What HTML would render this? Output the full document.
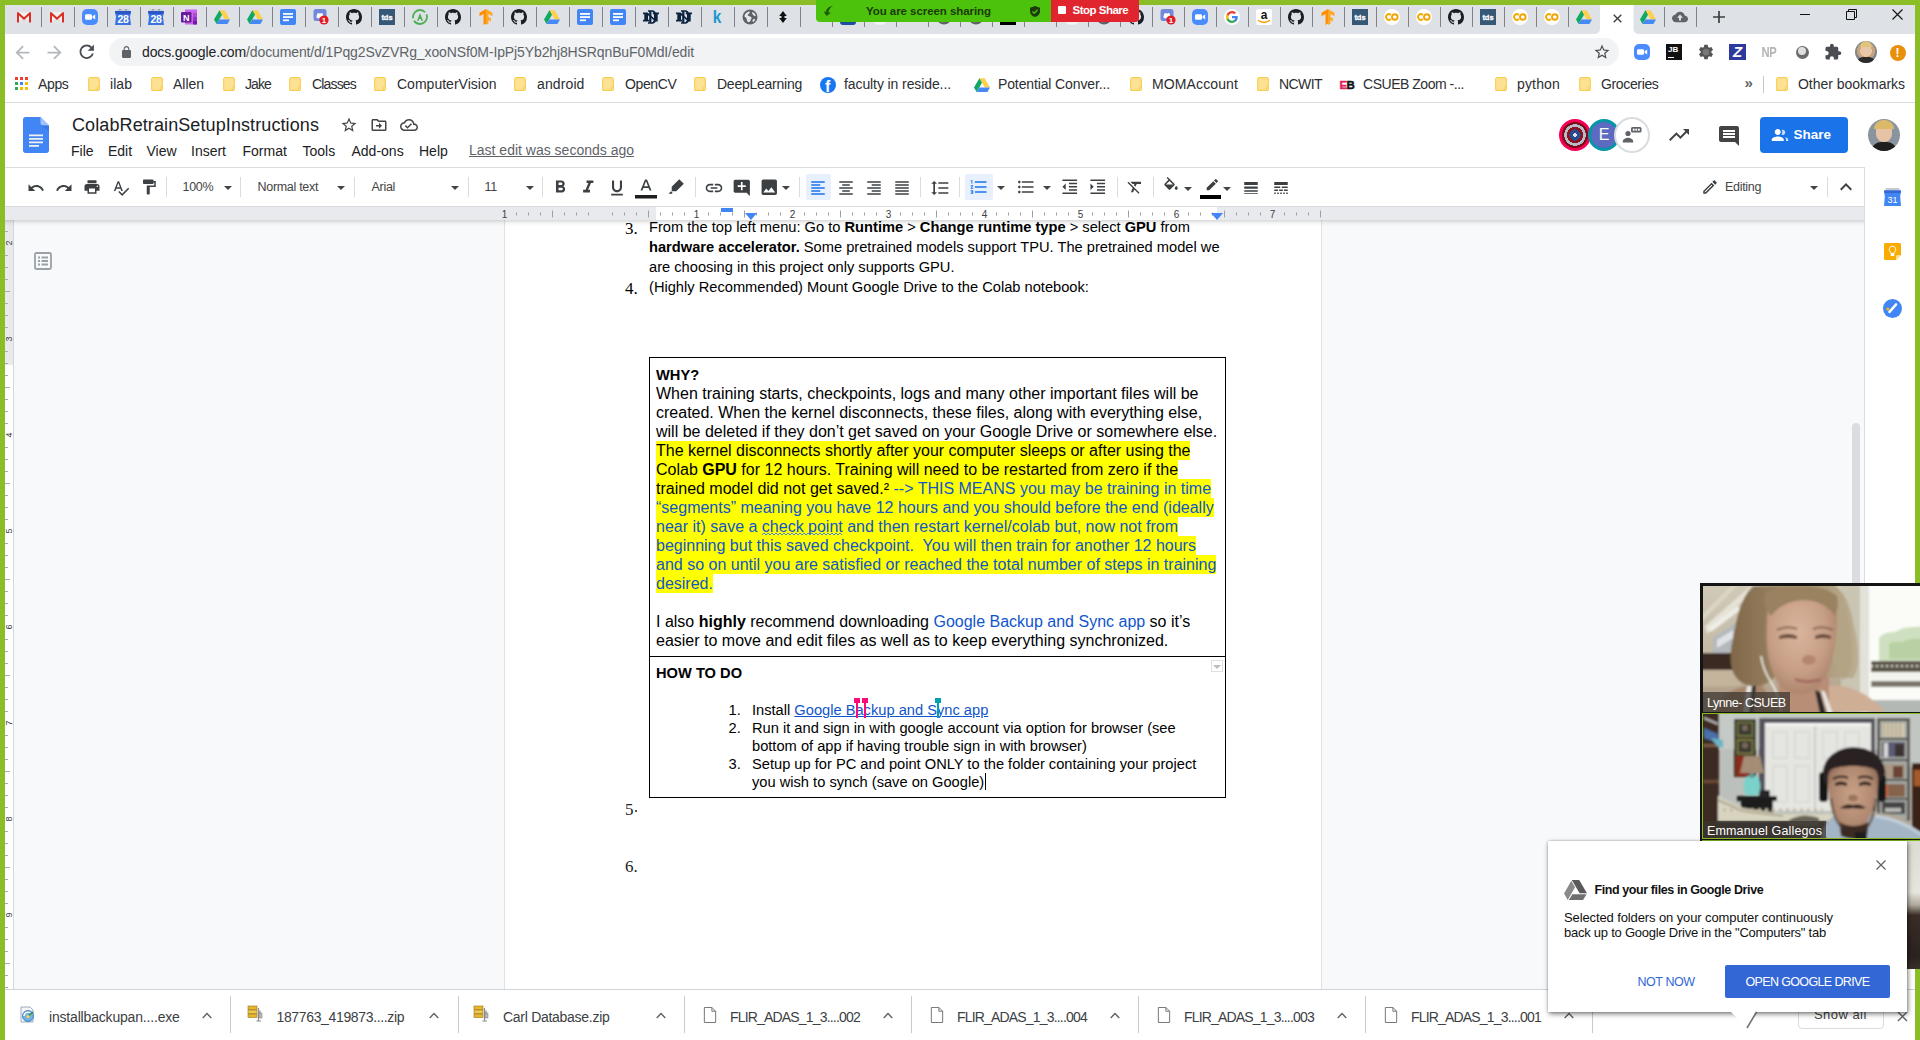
<!DOCTYPE html><html><head><meta charset="utf-8"><title>ColabRetrainSetupInstructions - Google Docs</title><style>
*{box-sizing:border-box;margin:0;padding:0}
html,body{width:1920px;height:1040px;overflow:hidden;background:#fff}
body{position:relative;font-family:"Liberation Sans",sans-serif;color:#202124}
.abs{position:absolute}
svg{display:block;overflow:visible}
/* screen-share border */
#gl{left:0;top:0;width:5px;height:1040px;background:#8bbd26}
#gt{left:0;top:0;width:1920px;height:5px;background:#8bbd26}
#gr{left:1915px;top:0;width:5px;height:1040px;background:#8bbd26}
/* chrome */
#tabbar{left:5px;top:5px;width:1910px;height:29px;background:#dee1e6}
.tsep{position:absolute;top:7px;width:1px;height:20px;background:#80848a}
.tic{position:absolute;top:9px;width:16px;height:16px}
#acttab{left:1592px;top:5px;width:50px;height:29px}
#navbar{left:5px;top:34px;width:1910px;height:34px;background:#fff}
#omni{left:108.500px;top:38px;width:1510.500px;height:28px;border-radius:14px;background:#f1f3f4}
#url{left:142px;top:43px;font-size:14px;line-height:18px;color:#5f6368;letter-spacing:-0.12px;white-space:nowrap}
#url b{font-weight:normal;color:#202124}
#bmbar{left:5px;top:68px;width:1910px;height:35px;background:#fff;border-bottom:1px solid #dadce0}
.bm{position:absolute;top:76px;font-size:14px;line-height:17px;color:#2c2e31;white-space:nowrap}
.fold{position:absolute;top:77px;width:12px;height:14px;margin-left:-1.500px}
/* docs */
#dochead{left:5px;top:103px;width:1910px;height:64px;background:#fff}
#title{left:72px;top:113px;font-size:18px;line-height:24px;color:#202124;white-space:nowrap;letter-spacing:0.1px}
.menu{position:absolute;top:142px;font-size:14px;line-height:18px;color:#202124;white-space:nowrap}
#lastedit{left:469px;top:141px;font-size:14px;line-height:18px;color:#5f6368;text-decoration:underline;white-space:nowrap}
#toolbar{left:5px;top:167px;width:1859px;height:39px;background:#fff;border-top:1px solid #dadce0}
.tbtxt{position:absolute;font-size:12.500px;line-height:16px;color:#444;white-space:nowrap;letter-spacing:-0.3px}
.tsp{position:absolute;top:177px;width:1px;height:20px;background:#dadce0}
.caret{position:absolute;width:0;height:0;border-left:4px solid transparent;border-right:4px solid transparent;border-top:4px solid #444}
#ruler{left:5px;top:206px;width:1859px;height:14px;background:#e8eaed;border-top:1px solid #dadce0}
#rulerw{left:656px;top:207px;width:561px;height:13px;background:#fff}
.rnum{position:absolute;top:207.500px;font-size:10px;line-height:13px;color:#3c4043;width:12px;text-align:center}
#docbg{left:5px;top:220px;width:1859px;height:770px;background:#f8f9fa}
#vruler{left:5px;top:220px;width:8px;height:770px;background:#fff}
#vrulerg{left:5px;top:220px;width:8px;height:145px;background:#e8eaed}
#page{left:504px;top:220px;width:818px;height:770px;background:#fff;border-left:1px solid #e2e2e2;border-right:1px solid #e2e2e2}
#side{left:1864px;top:167px;width:51px;height:822px;background:#fff;border-left:1px solid #dadce0}
.doc{position:absolute;font-size:14.667px;line-height:20px;color:#000;white-space:nowrap}
.t16{position:absolute;font-size:16px;line-height:19px;color:#000;white-space:nowrap}
.hl{background:#ffff00;display:inline-block;height:19px;line-height:19px;vertical-align:top}
.bl{color:#1155cc}
.lnum{position:absolute;font-family:"Liberation Serif",serif;font-size:17px;line-height:20px;color:#000}
/* downloads */
#dlbar{left:5px;top:989px;width:1910px;height:51px;background:#fff;border-top:1px solid #d0d3d7}
.dl{position:absolute;top:1008px;font-size:14px;line-height:18px;color:#3c4043;white-space:nowrap}
.dlsep{position:absolute;top:996px;width:1px;height:37px;background:#c8cacd}

</style></head><body>
<svg width="0" height="0" style="position:absolute">
<defs>
<symbol id="i-gmail" viewBox="0 0 16 16"><rect x="1" y="3.200" width="14" height="10.300" fill="#f1f1f1"/><path d="M2 13.500 8 8.500l6 5z" fill="#e2e2e2"/><path d="M1 13.500V3.200h1.500L8 8.300l5.500-5.100H15v10.300h-2V6.400L8 10.900 3 6.400v7.100z" fill="#d93025"/></symbol>
<symbol id="i-zoom" viewBox="0 0 16 16"><rect x="0" y="0" width="16" height="16" rx="5" fill="#4a8cff"/><rect x="3" y="5.200" width="7" height="5.600" rx="1.300" fill="#fff"/><path d="M10.600 7.200 13.200 5.500v5L10.600 8.800z" fill="#fff"/></symbol>
<symbol id="i-cal" viewBox="0 0 16 16"><rect x="1.500" y="0.300" width="13" height="3" fill="#c9cdd3"/><rect x="4" y="0" width="2" height="1.500" fill="#9aa0a6"/><rect x="10" y="0" width="2" height="1.500" fill="#9aa0a6"/><path d="M0 2h16l-1 6 1 8H0l1-8z" fill="#3b73e0"/><path d="M0 2h16l-.5 3H.5z" fill="#2a56c6"/><text x="8" y="14" font-family="Liberation Sans,sans-serif" font-size="10.500" font-weight="bold" fill="#fff" text-anchor="middle" letter-spacing="-0.3">28</text></symbol>
<symbol id="i-onenote" viewBox="0 0 16 16"><rect x="4" y="0.500" width="12" height="15" fill="#ca64ea"/><rect x="12" y="4" width="4" height="4" fill="#ae4bd5"/><rect x="12" y="8" width="4" height="4" fill="#9332bf"/><rect x="12" y="12" width="4" height="3.500" fill="#7719aa"/><rect x="0" y="3" width="10.500" height="10.500" rx="1" fill="#6a1b9a"/><text x="5.250" y="11.600" font-family="Liberation Sans,sans-serif" font-size="9" font-weight="bold" fill="#fff" text-anchor="middle">N</text></symbol>
<symbol id="i-drive" viewBox="0 0 16 16"><path d="M5.400 1.200h5.200L16 10.500h-5.200z" fill="#ffcf48"/><path d="M5.400 1.200 8 5.700 2.600 15 0 10.500z" fill="#11a861"/><path d="M5.300 10.500H16L13.400 15H2.600z" fill="#4688f4"/></symbol>
<symbol id="i-docs" viewBox="0 0 16 16"><rect x="0" y="0" width="16" height="16" rx="2" fill="#4285f4"/><rect x="3" y="4" width="10" height="1.800" fill="#fff"/><rect x="3" y="7.200" width="10" height="1.800" fill="#fff"/><rect x="3" y="10.400" width="6" height="1.800" fill="#fff"/></symbol>
<symbol id="i-disc" viewBox="0 0 16 16"><rect x="0.500" y="0" width="13" height="12" rx="2.500" fill="#7289da"/><path d="M3.500 8.500c0-3 1-4.500 2-4.500l1 .6h1l1-.6c1 0 2 1.500 2 4.500-1 .9-2 .9-2.500.9l-.4-.8h-1.200l-.4.800c-.5 0-1.500 0-2.500-.9z" fill="#fff"/><circle cx="11" cy="11" r="4.600" fill="#e31b23"/><text x="11" y="14" font-family="Liberation Sans,sans-serif" font-size="8" font-weight="bold" fill="#fff" text-anchor="middle">1</text></symbol>
<symbol id="i-gh" viewBox="0 0 16 16"><path fill="#1b1f23" d="M8 0C3.580 0 0 3.580 0 8c0 3.540 2.290 6.530 5.470 7.590.4.070.55-.17.55-.38 0-.19-.01-.82-.01-1.490-2.010.370-2.530-.490-2.690-.940-.09-.23-.48-.94-.82-1.130-.28-.15-.68-.52-.01-.53.630-.010 1.080.580 1.230.820.720 1.210 1.870.870 2.330.660.070-.52.280-.87.510-1.070-1.780-.2-3.640-.89-3.640-3.950 0-.87.310-1.590.820-2.150-.08-.2-.36-1.020.080-2.120 0 0 .67-.21 2.200.820.640-.18 1.320-.27 2-.27.680 0 1.360.090 2 .270 1.530-1.040 2.200-.82 2.200-.82.440 1.100.160 1.920.080 2.120.510.560.820 1.270.820 2.150 0 3.070-1.870 3.750-3.650 3.950.290.250.540.730.540 1.480 0 1.070-.01 1.930-.01 2.200 0 .210.150.460.550.380A8.013 8.013 0 0016 8c0-4.420-3.580-8-8-8z"/></symbol>
<symbol id="i-tds" viewBox="0 0 16 16"><rect width="16" height="16" fill="#355876"/><text x="8" y="11" font-family="Liberation Sans,sans-serif" font-size="7.500" font-weight="bold" fill="#fff" text-anchor="middle" stroke="#fff" stroke-width=".3">tds</text></symbol>
<symbol id="i-ga" viewBox="0 0 16 16"><circle cx="8" cy="8" r="7" fill="none" stroke="#4caf50" stroke-width="1.800" stroke-dasharray="18 2.500"/><path d="M5 11.800 8 4l3 7.800h-1.700L8.800 10H7.200l-.5 1.800z" fill="#4caf50"/></symbol>
<symbol id="i-tf" viewBox="0 0 16 16"><path d="M8 0 1.500 3.700v3.600l4-2.300V16l2.500-1.500z" fill="#ff8f00"/><path d="M8 0l6.500 3.700v3.600l-4-2.300v3l2.500 1.400v3L10.500 11v3.500L8 16z" fill="#ffa726"/></symbol>
<symbol id="i-nd" viewBox="0 0 16 16"><g fill="#0c2340"><path d="M5 1.200h4c3 0 4.600 2.600 4.600 6.800S12 14.800 9 14.800H5v-1.600h1.200V2.800H5zM8.400 2.800v10.400H9c1.500 0 2.200-2 2.200-5.200S10.500 2.800 9 2.800z" fill-rule="evenodd"/><path d="M0 3.600h4.600L11 9.200V5.200H9.800V3.600H16v1.600h-1.300v7.200h-2.500L5 6.300v4.500h1.300v1.600H0v-1.600h1.300V5.200H0z"/></g></symbol>
<symbol id="i-k" viewBox="0 0 16 16"><text x="8" y="14.300" font-family="Liberation Sans,sans-serif" font-size="18" font-weight="bold" fill="#1c96d0" text-anchor="middle" transform="translate(1.200 0) scale(.85 1)">k</text></symbol>
<symbol id="i-globe" viewBox="0 0 16 16"><circle cx="8" cy="8" r="7.500" fill="#5f6368"/><path d="M2.500 6.500c1-2.500 3-3.800 5-4 .5 1 0 2-1 2.500s-1 1.500 0 2 2.500.5 3 1.500-1 2-1 3-1.500 2-2.500 1.500S5 11 4.500 9.500 2 8 2.500 6.500zM10.500 3c1.500.5 3 2 3.300 4-1 .5-2-.5-2.800-1.300S9.800 3.800 10.500 3zM11.500 10c1-.3 1.800.2 1.500 1s-1.200 1.800-2 2-.5-2.500.5-3z" fill="#e6e8eb"/></symbol>
<symbol id="i-ud" viewBox="0 0 16 16"><path d="M8 2 11.800 7H4.200zM8 14 4.200 9h7.600z" fill="#111"/><rect x="6.500" y="6.500" width="3" height="3" fill="#111"/></symbol>
<symbol id="i-g" viewBox="0 0 16 16"><circle cx="8" cy="8" r="8" fill="#fff"/><g transform="translate(2 2) scale(.75)"><path d="M15.700 8.200c0-.6-.05-1.100-.15-1.700H8v3.100h4.300c-.2 1-.75 1.850-1.600 2.400v2h2.600c1.500-1.400 2.400-3.450 2.400-5.800z" fill="#4285f4"/><path d="M8 16c2.150 0 4-.7 5.300-1.950l-2.600-2c-.7.500-1.650.800-2.700.800-2.100 0-3.850-1.400-4.500-3.300H.85v2.050C2.150 14.200 4.900 16 8 16z" fill="#34a853"/><path d="M3.500 9.550c-.15-.5-.25-1-.25-1.550s.1-1.050.25-1.550V4.400H.85C.3 5.500 0 6.700 0 8s.3 2.500.85 3.600z" fill="#fbbc05"/><path d="M8 3.150c1.150 0 2.200.4 3.050 1.200l2.300-2.300C11.950.800 10.150 0 8 0 4.900 0 2.150 1.800.85 4.400L3.500 6.450c.65-1.900 2.400-3.300 4.500-3.300z" fill="#ea4335"/></g></symbol>
<symbol id="i-amz" viewBox="0 0 16 16"><rect width="16" height="16" rx="2" fill="#fff"/><text x="8" y="10" font-family="Liberation Sans,sans-serif" font-size="12" font-weight="bold" fill="#111" text-anchor="middle">a</text><path d="M2.500 11.500c3.500 2.500 7.500 2.500 11 0" fill="none" stroke="#ff9900" stroke-width="1.500" stroke-linecap="round"/></symbol>
<symbol id="i-co" viewBox="0 0 16 16"><circle cx="8" cy="8" r="8" fill="#fff"/><path d="M6.900 6A2.800 2.800 0 1 0 6.900 10" fill="none" stroke="#f9ab00" stroke-width="1.900"/><circle cx="10.800" cy="8" r="2.800" fill="none" stroke="#f5a300" stroke-width="1.900"/></symbol>
<symbol id="i-cloud" viewBox="0 0 16 16"><path d="M12.900 6.700C12.450 4.400 10.430 2.700 8 2.700c-1.930 0-3.600 1.090-4.430 2.690C1.560 5.600 0 7.300 0 9.350c0 2.200 1.790 4 4 4h8.650c1.840 0 3.350-1.490 3.350-3.330 0-1.760-1.370-3.190-3.100-3.320z" fill="#5f6368"/><path d="M8 5.500 5 8.800h2v2.700h2V8.800h2z" fill="#dee1e6"/></symbol>
<symbol id="i-folder" viewBox="0 0 12 14"><path d="M1.500.600h8.800c.6 0 1 .4 1 1v10.800c0 .6-.4 1-1 1H.7V1.400c0-.4.400-.8.800-.8z" fill="#fde293" stroke="#f6c945" stroke-width="1"/><rect x="9.300" y="9.600" width="2.200" height="3.800" rx="1" fill="#fde293" stroke="#f6c945" stroke-width=".8"/></symbol>
<symbol id="i-file" viewBox="0 0 14 17"><path d="M1 .5h8l4 4v12H1z" fill="#fff" stroke="#6e6e6e" stroke-width="1"/><path d="M9 .5v4h4" fill="none" stroke="#6e6e6e" stroke-width="1"/></symbol>
<symbol id="i-zip" viewBox="0 0 18 18"><rect x="1" y="1" width="9" height="3.500" fill="#e9b630" stroke="#9a7414" stroke-width=".6"/><rect x="1" y="5" width="9" height="3.500" fill="#f0c84a" stroke="#9a7414" stroke-width=".6"/><rect x="1" y="9" width="9" height="3.500" fill="#e9b630" stroke="#9a7414" stroke-width=".6"/><path d="M11.500 3v13M9.500 16h4.500M13 5.500v7" stroke="#8c8c8c" stroke-width="1.200" fill="none"/><rect x="12" y="8" width="3" height="5" fill="#b9b9b9" stroke="#777" stroke-width=".5"/></symbol>
<symbol id="i-exe" viewBox="0 0 18 18"><path d="M2 1h9l3 3v12H2z" fill="#f4f6fa" stroke="#8a99ad" stroke-width=".8"/><circle cx="9" cy="10" r="5.500" fill="#6fb4e8" stroke="#2f6fb0" stroke-width=".8"/><path d="M5 10a4 4 0 0 1 7-2.500" stroke="#fff" stroke-width="1.400" fill="none"/><path d="M9 10 14 6" stroke="#2b8a3e" stroke-width="1.600"/><circle cx="9" cy="10.500" r="1.600" fill="#ffd54a"/></symbol>
</defs>
</svg>

<div class="abs" id="gl"></div><div class="abs" id="gt"></div><div class="abs" id="gr"></div>
<div class="abs" id="tabbar"></div>
<svg class="abs" style="left:1594px;top:5px" width="46" height="29" viewBox="0 0 46 29"><path d="M0 29C4 29 6 27 6 23V0H39.500V23C39.500 27 41.500 29 46 29z" fill="#fff"/></svg>
<div class="tsep" style="left:41px"></div>
<svg class="tic" style="left:16.0px"><use href="#i-gmail"/></svg>
<div class="tsep" style="left:74px"></div>
<svg class="tic" style="left:49.0px"><use href="#i-gmail"/></svg>
<div class="tsep" style="left:107px"></div>
<svg class="tic" style="left:82.0px"><use href="#i-zoom"/></svg>
<div class="tsep" style="left:140px"></div>
<svg class="tic" style="left:115.0px"><use href="#i-cal"/></svg>
<div class="tsep" style="left:173px"></div>
<svg class="tic" style="left:148.0px"><use href="#i-cal"/></svg>
<div class="tsep" style="left:206px"></div>
<svg class="tic" style="left:181.0px"><use href="#i-onenote"/></svg>
<div class="tsep" style="left:239px"></div>
<svg class="tic" style="left:214.0px"><use href="#i-drive"/></svg>
<div class="tsep" style="left:272px"></div>
<svg class="tic" style="left:247.0px"><use href="#i-drive"/></svg>
<div class="tsep" style="left:305px"></div>
<svg class="tic" style="left:280.0px"><use href="#i-docs"/></svg>
<div class="tsep" style="left:338px"></div>
<svg class="tic" style="left:313.0px"><use href="#i-disc"/></svg>
<div class="tsep" style="left:371px"></div>
<svg class="tic" style="left:346.0px"><use href="#i-gh"/></svg>
<div class="tsep" style="left:404px"></div>
<svg class="tic" style="left:379.0px"><use href="#i-tds"/></svg>
<div class="tsep" style="left:437px"></div>
<svg class="tic" style="left:412.0px"><use href="#i-ga"/></svg>
<div class="tsep" style="left:470px"></div>
<svg class="tic" style="left:445.0px"><use href="#i-gh"/></svg>
<div class="tsep" style="left:503px"></div>
<svg class="tic" style="left:478.0px"><use href="#i-tf"/></svg>
<div class="tsep" style="left:536px"></div>
<svg class="tic" style="left:511.0px"><use href="#i-gh"/></svg>
<div class="tsep" style="left:569px"></div>
<svg class="tic" style="left:544.0px"><use href="#i-drive"/></svg>
<div class="tsep" style="left:602px"></div>
<svg class="tic" style="left:577.0px"><use href="#i-docs"/></svg>
<div class="tsep" style="left:635px"></div>
<svg class="tic" style="left:610.0px"><use href="#i-docs"/></svg>
<div class="tsep" style="left:668px"></div>
<svg class="tic" style="left:643.0px"><use href="#i-nd"/></svg>
<div class="tsep" style="left:701px"></div>
<svg class="tic" style="left:676.0px"><use href="#i-nd"/></svg>
<div class="tsep" style="left:734px"></div>
<svg class="tic" style="left:709.0px"><use href="#i-k"/></svg>
<div class="tsep" style="left:767px"></div>
<svg class="tic" style="left:742.0px"><use href="#i-globe"/></svg>
<div class="tsep" style="left:800px"></div>
<svg class="tic" style="left:775.0px"><use href="#i-ud"/></svg>
<div class="tsep" style="left:832px"></div>
<div class="tsep" style="left:864px"></div>
<div class="abs" style="left:840.0px;top:9px;width:16px;height:16px;border-radius:3px;background:#1a4fa0"></div>
<div class="tsep" style="left:896px"></div>
<div class="abs" style="left:872.0px;top:9px;width:16px;height:16px;border-radius:8px;background:#f4f4f4"></div>
<div class="tsep" style="left:928px"></div>
<div class="tsep" style="left:960px"></div>
<svg class="tic" style="left:936.0px"><use href="#i-globe"/></svg>
<div class="tsep" style="left:992px"></div>
<svg class="tic" style="left:968.0px"><use href="#i-globe"/></svg>
<div class="tsep" style="left:1024px"></div>
<div class="abs" style="left:1000.0px;top:9px;width:16px;height:16px;background:#000"></div>
<div class="tsep" style="left:1056px"></div>
<div class="tsep" style="left:1088px"></div>
<div class="abs" style="left:1064.0px;top:9px;width:16px;height:16px;border-radius:8px;background:#f4f4f4"></div>
<div class="tsep" style="left:1120px"></div>
<svg class="tic" style="left:1096.0px"><use href="#i-globe"/></svg>
<div class="tsep" style="left:1152px"></div>
<svg class="tic" style="left:1128.0px"><use href="#i-gh"/></svg>
<div class="tsep" style="left:1184px"></div>
<svg class="tic" style="left:1160.0px"><use href="#i-disc"/></svg>
<div class="tsep" style="left:1216px"></div>
<svg class="tic" style="left:1192.0px"><use href="#i-zoom"/></svg>
<div class="tsep" style="left:1248px"></div>
<svg class="tic" style="left:1224.0px"><use href="#i-g"/></svg>
<div class="tsep" style="left:1280px"></div>
<svg class="tic" style="left:1256.0px"><use href="#i-amz"/></svg>
<div class="tsep" style="left:1312px"></div>
<svg class="tic" style="left:1288.0px"><use href="#i-gh"/></svg>
<div class="tsep" style="left:1344px"></div>
<svg class="tic" style="left:1320.0px"><use href="#i-tf"/></svg>
<div class="tsep" style="left:1376px"></div>
<svg class="tic" style="left:1352.0px"><use href="#i-tds"/></svg>
<div class="tsep" style="left:1408px"></div>
<svg class="tic" style="left:1384.0px"><use href="#i-co"/></svg>
<div class="tsep" style="left:1440px"></div>
<svg class="tic" style="left:1416.0px"><use href="#i-co"/></svg>
<div class="tsep" style="left:1472px"></div>
<svg class="tic" style="left:1448.0px"><use href="#i-gh"/></svg>
<div class="tsep" style="left:1504px"></div>
<svg class="tic" style="left:1480.0px"><use href="#i-tds"/></svg>
<div class="tsep" style="left:1536px"></div>
<svg class="tic" style="left:1512.0px"><use href="#i-co"/></svg>
<div class="tsep" style="left:1568px"></div>
<svg class="tic" style="left:1544.0px"><use href="#i-co"/></svg>
<svg class="tic" style="left:1576.0px"><use href="#i-drive"/></svg>
<svg class="abs" style="left:1612.5px;top:13.500px" width="9" height="9" viewBox="0 0 9 9"><path d="M.7.700l7.600 7.600M8.300.700l-7.600 7.600" stroke="#3c4043" stroke-width="1.400"/></svg>
<div class="tsep" style="left:1664px"></div>
<svg class="tic" style="left:1640.0px"><use href="#i-drive"/></svg>
<div class="tsep" style="left:1696px"></div>
<svg class="tic" style="left:1672.0px"><use href="#i-cloud"/></svg>
<svg class="abs" style="left:1712px;top:10px" width="14" height="14" viewBox="0 0 14 14"><path d="M7 1v12M1 7h12" stroke="#3c4043" stroke-width="1.700"/></svg>
<div class="abs" style="left:1800px;top:14px;width:10px;height:1px;background:#111"></div>
<svg class="abs" style="left:1846px;top:9px" width="11" height="11" viewBox="0 0 11 11"><path d="M.5 2.500h8v8h-8zM2.500 2.500v-2h8v8h-2" fill="none" stroke="#111" stroke-width="1"/></svg>
<svg class="abs" style="left:1892px;top:9px" width="11" height="11" viewBox="0 0 11 11"><path d="M.5.5l10 10M10.500.5l-10 10" stroke="#111" stroke-width="1.100"/></svg>
<div class="abs" style="left:816px;top:0;width:236px;height:21.500px;background:#4cc20c;border-radius:0 0 0 4px"></div>
<div class="abs" style="left:1051px;top:0;width:88px;height:21.500px;background:#e0252f;border-radius:0 0 4px 0"></div>
<div class="abs" style="left:866px;top:4px;font-size:11.500px;line-height:15px;font-weight:bold;color:#1c3b0a;white-space:nowrap;letter-spacing:-0.06px">You are screen sharing</div>
<svg class="abs" style="left:823px;top:6px" width="10" height="10" viewBox="0 0 10 10"><path d="M10 0C5.500.500 3 3 3 6L.5 5.200 3.500 10 8 6.800 5.500 6.500C5.500 4 7 1.500 10 0z" fill="#1a5c0a"/></svg>
<svg class="abs" style="left:1030px;top:6px" width="10" height="11" viewBox="0 0 10 11"><path d="M5 0 0 1.800v3.700c0 2.600 2.100 4.700 5 5.500 2.900-.8 5-2.900 5-5.500V1.800z" fill="#1c3b0a"/><path d="M2.500 5.500 4.300 7.300 7.600 3.800" stroke="#4cc20c" stroke-width="1.300" fill="none"/></svg>
<div class="abs" style="left:1058px;top:6px;width:8px;height:8px;background:#fff;border-radius:1px"></div>
<div class="abs" style="left:1072.500px;top:3px;font-size:11.500px;line-height:15px;font-weight:bold;color:#fff;white-space:nowrap;letter-spacing:-0.5px">Stop Share</div>
<div class="abs" id="navbar"></div>
<svg class="abs" style="left:11.500px;top:41.500px" width="21" height="21" viewBox="0 0 24 24"><path fill="#b4b7bb" d="M20 11H7.830l5.590-5.590L12 4l-8 8 8 8 1.410-1.410L7.830 13H20v-2z"/></svg>
<svg class="abs" style="left:43.500px;top:41.500px" width="21" height="21" viewBox="0 0 24 24"><path fill="#b4b7bb" d="M12 4l-1.410 1.410L16.170 11H4v2h12.170l-5.580 5.590L12 20l8-8z"/></svg>
<svg class="abs" style="left:75.500px;top:41.300px" width="21.500" height="21.500" viewBox="0 0 24 24"><path fill="#4a4d51" d="M17.650 6.350C16.200 4.900 14.210 4 12 4c-4.420 0-7.990 3.580-7.990 8s3.570 8 7.990 8c3.730 0 6.840-2.550 7.730-6h-2.080c-.82 2.330-3.040 4-5.650 4-3.310 0-6-2.690-6-6s2.690-6 6-6c1.660 0 3.140.69 4.220 1.780L13 11h7V4l-2.350 2.350z"/></svg>
<div class="abs" id="omni"></div>
<svg class="abs" style="left:121.500px;top:45.500px" width="9" height="12" viewBox="4 1 16 21"><path fill="#5f6368" d="M18 8h-1V6c0-2.760-2.240-5-5-5S7 3.240 7 6v2H6c-1.100 0-2 .9-2 2v10c0 1.100.9 2 2 2h12c1.100 0 2-.9 2-2V10c0-1.100-.9-2-2-2zm-2.900 0H8.900V6c0-1.710 1.390-3.100 3.100-3.100 1.710 0 3.100 1.390 3.100 3.100v2z"/></svg>
<div class="abs" id="url"><b>docs.google.com</b>/document/d/1Pqg2SvZVRg_xooNSf0M-IpPj5Yb2hj8HSRqnBuF0MdI/edit</div>
<svg class="abs" style="left:1593px;top:43px" width="18" height="18" viewBox="0 0 24 24"><path fill="#4a4d51" d="M22 9.240l-7.190-.62L12 2 9.190 8.630 2 9.240l5.460 4.730L5.820 21 12 17.270 18.180 21l-1.630-7.030L22 9.240zM12 15.400l-3.760 2.270 1-4.280-3.320-2.880 4.380-.38L12 6.100l1.710 4.040 4.380.38-3.320 2.880 1 4.280L12 15.400z"/></svg>
<svg class="abs" style="left:1634px;top:44px" width="16" height="16"><use href="#i-zoom"/></svg>
<div class="abs" style="left:1666px;top:44px;width:16px;height:16px;background:#111;color:#fff;font-size:8px;font-weight:bold;line-height:10px;padding:1px 0 0 2px">JB<div style="width:6px;height:1px;background:#fff;margin-top:2px"></div></div>
<svg class="abs" style="left:1697px;top:43px" width="18" height="18" viewBox="0 0 24 24"><path fill="#555" d="M19.140 12.940c.04-.3.060-.61.060-.94 0-.32-.02-.64-.07-.94l2.030-1.580c.18-.14.230-.41.120-.61l-1.920-3.320c-.12-.22-.37-.29-.59-.22l-2.390.96c-.5-.38-1.030-.7-1.620-.94l-.36-2.540c-.04-.24-.24-.41-.48-.41h-3.840c-.24 0-.43.17-.47.41l-.36 2.540c-.59.24-1.130.57-1.620.94l-2.390-.96c-.22-.08-.47 0-.59.22L2.740 8.870c-.12.210-.08.470.12.610l2.030 1.580c-.05.3-.09.63-.09.94s.02.64.07.94l-2.030 1.580c-.18.14-.23.41-.12.610l1.920 3.320c.12.220.37.290.59.220l2.390-.96c.5.380 1.030.7 1.620.94l.36 2.540c.05.24.24.41.48.41h3.840c.24 0 .44-.17.47-.41l.36-2.540c.59-.24 1.130-.56 1.620-.94l2.390.96c.22.080.47 0 .59-.22l1.920-3.320c.12-.22.070-.47-.12-.61l-2.010-1.580z"/><circle cx="12" cy="12" r="4.500" fill="#777"/></svg>
<div class="abs" style="left:1729px;top:44px;width:17px;height:16px;background:#2d3a9c;color:#fff;font-size:15px;font-weight:bold;font-style:italic;line-height:16px;text-align:center">Z</div>
<div class="abs" style="left:1759px;top:44px;width:20px;font-size:14px;font-weight:bold;line-height:16px;color:#b4b4b4;text-align:center;letter-spacing:-0.5px;transform:scaleX(.8)">NP</div>
<div class="abs" style="left:1796px;top:45.500px;width:13px;height:13px;border-radius:7px;background:#6b6b6b"></div><div class="abs" style="left:1797.500px;top:46.500px;width:8.500px;height:8.500px;border-radius:5px;background:#e0e0e0"></div>
<svg class="abs" style="left:1824px;top:43px" width="18" height="18" viewBox="0 0 24 24"><path fill="#4a4d51" d="M20.500 11H19V7c0-1.100-.9-2-2-2h-4V3.500C13 2.120 11.880 1 10.500 1S8 2.120 8 3.500V5H4c-1.100 0-1.990.9-1.990 2v3.800H3.500c1.490 0 2.700 1.210 2.700 2.700s-1.210 2.700-2.700 2.700H2V20c0 1.100.9 2 2 2h3.800v-1.500c0-1.490 1.210-2.700 2.700-2.700 1.490 0 2.700 1.210 2.700 2.700V22H17c1.100 0 2-.9 2-2v-4h1.500c1.380 0 2.500-1.120 2.500-2.500S21.880 11 20.500 11z"/></svg>
<div class="abs" style="left:1855px;top:41px;width:22px;height:22px;border-radius:11px;background:radial-gradient(circle at 50% 45%,#e9c7a8 0 35%,#c9a37a 36% 55%,#7b8793 56%);overflow:hidden"><div style="position:absolute;left:5px;top:0;width:12px;height:6px;background:#e3c27a;border-radius:6px 6px 0 0"></div><div style="position:absolute;left:2px;top:16px;width:18px;height:8px;background:#2b2b2b;border-radius:6px 6px 0 0"></div></div>
<div class="abs" style="left:1889.500px;top:44.500px;width:16px;height:16px;border-radius:8px;background:#e8900c;color:#fff;font-size:12px;font-weight:bold;line-height:16px;text-align:center">!</div>
<div class="abs" id="bmbar"></div>
<div class="abs" style="left:15px;top:77px;width:3px;height:3px;background:#ea4335"></div>
<div class="abs" style="left:20px;top:77px;width:3px;height:3px;background:#ea4335"></div>
<div class="abs" style="left:25px;top:77px;width:3px;height:3px;background:#ea4335"></div>
<div class="abs" style="left:15px;top:82px;width:3px;height:3px;background:#34a853"></div>
<div class="abs" style="left:20px;top:82px;width:3px;height:3px;background:#4285f4"></div>
<div class="abs" style="left:25px;top:82px;width:3px;height:3px;background:#fbbc05"></div>
<div class="abs" style="left:15px;top:87px;width:3px;height:3px;background:#34a853"></div>
<div class="abs" style="left:20px;top:87px;width:3px;height:3px;background:#fbbc05"></div>
<div class="abs" style="left:25px;top:87px;width:3px;height:3px;background:#fbbc05"></div>
<div class="bm" style="left:38px;letter-spacing:-0.353px">Apps</div>
<div class="bm" style="left:110px;letter-spacing:0.053px">ilab</div>
<svg class="fold" style="left:89px"><use href="#i-folder"/></svg>
<div class="bm" style="left:173px;letter-spacing:-0.026px">Allen</div>
<svg class="fold" style="left:152px"><use href="#i-folder"/></svg>
<div class="bm" style="left:245px;letter-spacing:-0.893px">Jake</div>
<svg class="fold" style="left:224px"><use href="#i-folder"/></svg>
<div class="bm" style="left:312px;letter-spacing:-0.827px">Classes</div>
<svg class="fold" style="left:290px"><use href="#i-folder"/></svg>
<div class="bm" style="left:397px;letter-spacing:0.011px">ComputerVision</div>
<svg class="fold" style="left:375px"><use href="#i-folder"/></svg>
<div class="bm" style="left:537px;letter-spacing:0.114px">android</div>
<svg class="fold" style="left:515px"><use href="#i-folder"/></svg>
<div class="bm" style="left:625px;letter-spacing:-0.367px">OpenCV</div>
<svg class="fold" style="left:603px"><use href="#i-folder"/></svg>
<div class="bm" style="left:717px;letter-spacing:-0.247px">DeepLearning</div>
<svg class="fold" style="left:695px"><use href="#i-folder"/></svg>
<div class="bm" style="left:844px;letter-spacing:-0.097px">faculty in reside...</div>
<div class="abs" style="left:820px;top:77px;width:16px;height:16px;border-radius:8px;background:#1877f2;overflow:hidden"><div style="position:absolute;left:5px;top:1px;color:#fff;font-weight:bold;font-size:16px;line-height:18px">f</div></div>
<div class="bm" style="left:998px;letter-spacing:-0.126px">Potential Conver...</div>
<svg class="abs" style="left:974px;top:77px" width="16" height="16"><use href="#i-drive"/></svg>
<div class="bm" style="left:1152px;letter-spacing:0.12px">MOMAccount</div>
<svg class="fold" style="left:1131.5px"><use href="#i-folder"/></svg>
<div class="bm" style="left:1279px;letter-spacing:-0.576px">NCWIT</div>
<svg class="fold" style="left:1258.5px"><use href="#i-folder"/></svg>
<div class="bm" style="left:1363px;letter-spacing:-0.475px">CSUEB Zoom -...</div>
<div class="abs" style="left:1339.500px;top:78px;font-size:11.500px;font-weight:bold;line-height:14px;color:#e0245e;letter-spacing:-0.6px;-webkit-text-stroke:0.4px">E<span style="color:#111">B</span></div>
<div class="bm" style="left:1517px;letter-spacing:0.162px">python</div>
<svg class="fold" style="left:1496.5px"><use href="#i-folder"/></svg>
<div class="bm" style="left:1601px;letter-spacing:-0.353px">Groceries</div>
<svg class="fold" style="left:1580.5px"><use href="#i-folder"/></svg>
<div class="bm" style="left:1798px;letter-spacing:-0.025px">Other bookmarks</div>
<svg class="fold" style="left:1777.5px"><use href="#i-folder"/></svg>
<div class="abs" style="left:1744.500px;top:74px;font-size:15px;font-weight:bold;line-height:18px;color:#5f6368">»</div>
<div class="abs" style="left:1763px;top:76px;width:1px;height:17px;background:#c4c7cb"></div>
<div class="abs" id="dochead"></div>
<svg class="abs" style="left:23px;top:117px" width="26" height="36" viewBox="0 0 26 36"><path d="M2.500 0h15L26 8.500V33.500c0 1.400-1.100 2.500-2.500 2.500h-21C1.100 36 0 34.900 0 33.500v-31C0 1.100 1.100 0 2.500 0z" fill="#4285f4"/><path d="M17.500 0 26 8.500h-6c-1.400 0-2.500-1.100-2.500-2.500z" fill="#a1c2fa"/><path d="M17.800 8.200 26 14V8.500z" fill="#3367d6" opacity=".5"/><path d="M6 17.500h14v1.800H6zM6 21h14v1.800H6zM6 24.500h14v1.800H6zM6 28h10v1.800H6z" fill="#f1f1f1"/></svg>
<div class="abs" id="title">ColabRetrainSetupInstructions</div>
<svg class="abs" style="left:340.0px;top:116.0px" width="18" height="18" viewBox="0 0 24 24"><path fill="#444" d="M22 9.240l-7.190-.62L12 2 9.190 8.630 2 9.240l5.460 4.730L5.820 21 12 17.270 18.180 21l-1.630-7.030L22 9.240zM12 15.400l-3.760 2.270 1-4.280-3.320-2.880 4.380-.38L12 6.100l1.710 4.040 4.380.38-3.320 2.880 1 4.280L12 15.400z"/></svg>
<svg class="abs" style="left:369.5px;top:116.0px" width="18" height="18" viewBox="0 0 24 24"><path fill="#444" d="M20 6h-8l-2-2H4c-1.100 0-2 .9-2 2v12c0 1.100.9 2 2 2h16c1.100 0 2-.9 2-2V8c0-1.100-.9-2-2-2zm0 12H4V6h5.170l2 2H20v10zm-8-1l4-4-4-4v3H8v2h4v3z"/></svg>
<svg class="abs" style="left:400.0px;top:116.0px" width="18" height="18" viewBox="0 0 24 24"><path fill="#444" d="M19.350 10.040C18.670 6.590 15.640 4 12 4 9.110 4 6.600 5.640 5.350 8.040 2.340 8.360 0 10.910 0 14c0 3.310 2.690 6 6 6h13c2.760 0 5-2.240 5-5 0-2.640-2.050-4.780-4.650-4.960zM19 18H6c-2.210 0-4-1.790-4-4s1.790-4 4-4h.71C7.370 7.690 9.480 6 12 6c3.040 0 5.500 2.460 5.500 5.500v.5H19c1.660 0 3 1.340 3 3s-1.340 3-3 3zm-9-3.820l-2.090-2.090L6.500 13.500 10 17l6.010-6.010-1.410-1.410z"/></svg>
<div class="menu" style="left:71px">File</div>
<div class="menu" style="left:108px">Edit</div>
<div class="menu" style="left:146.5px">View</div>
<div class="menu" style="left:191px">Insert</div>
<div class="menu" style="left:242.5px">Format</div>
<div class="menu" style="left:302.5px">Tools</div>
<div class="menu" style="left:351.5px">Add-ons</div>
<div class="menu" style="left:419px">Help</div>
<div class="abs" id="lastedit">Last edit was seconds ago</div>
<div class="abs" style="left:1559px;top:119px;width:32px;height:32px;border-radius:16px;background:#f50057"></div>
<div class="abs" style="left:1562px;top:122px;width:26px;height:26px;border-radius:13px;background:radial-gradient(circle,#dfe3ee 0 10%,#2a4a8c 11% 30%,#8a1420 31% 44%,#b8bcc8 45% 58%,#7a0c18 59% 78%,#1a0a10 79%)"></div>
<div class="abs" style="left:1588px;top:119px;width:32px;height:32px;border-radius:16px;background:#0097a7"></div>
<div class="abs" style="left:1591px;top:122px;width:26px;height:26px;border-radius:13px;background:#5c6bc0;color:#fff;font-size:16px;line-height:26px;text-align:center">E</div>
<div class="abs" style="left:1614px;top:117px;width:36px;height:36px;border-radius:18px;background:#fff;border:2px solid #dadce0"></div>
<svg class="abs" style="left:1622px;top:126px" width="20" height="18" viewBox="0 0 20 18"><circle cx="6" cy="7.500" r="2.600" fill="#5f6368"/><path d="M.8 15.500c0-2.600 3.500-3.700 5.200-3.700s5.200 1.100 5.200 3.700V16.500H.8z" fill="#5f6368"/><rect x="9" y="1" width="10.500" height="5.500" rx="1.500" fill="#5f6368"/><rect x="10.800" y="2.700" width="1.800" height="2" fill="#fff"/><rect x="13.400" y="2.700" width="1.800" height="2" fill="#fff"/><rect x="16" y="2.700" width="1.800" height="2" fill="#fff"/></svg>
<svg class="abs" style="left:1666.5px;top:123.0px" width="24" height="24" viewBox="0 0 24 24"><path fill="#444" d="M16 6l2.290 2.290-4.880 4.880-4-4L2 16.590 3.410 18l6-6 4 4 6.300-6.290L22 12V6z"/></svg>
<svg class="abs" style="left:1717.0px;top:123.5px" width="24" height="24" viewBox="0 0 24 24"><path fill="#444" d="M21.990 4c0-1.100-.89-2-1.990-2H4c-1.100 0-2 .9-2 2v12c0 1.100.9 2 2 2h14l4 4-.01-18zM18 14H6v-2h12v2zm0-3H6V9h12v2zm0-3H6V6h12v2z"/></svg>
<div class="abs" style="left:1760px;top:117px;width:88px;height:36px;border-radius:4px;background:#1a73e8"></div>
<svg class="abs" style="left:1771px;top:126px" width="18" height="18" viewBox="0 0 24 24"><path fill="#fff" d="M9 12c2.210 0 4-1.790 4-4s-1.790-4-4-4-4 1.790-4 4 1.790 4 4 4zm0 2c-2.670 0-8 1.340-8 4v2h16v-2c0-2.660-5.330-4-8-4z"/><path fill="#fff" opacity=".75" d="M15.500 12c1.930 0 3.500-1.570 3.500-3.500S17.430 5 15.500 5c-.5 0-1 .1-1.400.3.600.9.900 1.800.900 2.700 0 1.100-.4 2.200-1 3 .4.600.9 1 1.500 1zM18.500 14.500c.9.800 1.500 1.900 1.500 3.500v2h3v-2c0-1.800-2.300-3-4.500-3.500z"/></svg>
<div class="abs" style="left:1793.500px;top:126px;font-size:13.500px;font-weight:bold;line-height:18px;color:#fff;letter-spacing:0">Share</div>
<div class="abs" style="left:1868px;top:119px;width:32px;height:32px;border-radius:16px;overflow:hidden;background:#8a949e"><div style="position:absolute;left:8px;top:3px;width:16px;height:20px;border-radius:8px;background:#e6c3a5"></div><div style="position:absolute;left:6px;top:1px;width:20px;height:9px;border-radius:10px 10px 0 0;background:#dcb86a"></div><div style="position:absolute;left:3px;top:23px;width:26px;height:12px;border-radius:10px 10px 0 0;background:#1f1f1f"></div></div>
<div class="abs" id="toolbar"></div>
<svg class="abs" style="left:26.5px;top:178.5px" width="18" height="18" viewBox="0 0 24 24"><path fill="#3c4043" d="M12.500 8c-2.650 0-5.050.99-6.900 2.600L2 7v9h9l-3.620-3.620c1.390-1.160 3.160-1.880 5.120-1.880 3.540 0 6.550 2.310 7.600 5.500l2.370-.78C21.080 11.030 17.150 8 12.500 8z"/></svg>
<svg class="abs" style="left:55.0px;top:178.5px" width="18" height="18" viewBox="0 0 24 24"><path fill="#3c4043" d="M18.400 10.600C16.550 8.990 14.150 8 11.500 8c-4.650 0-8.580 3.030-9.960 7.220L3.900 16c1.050-3.190 4.050-5.500 7.600-5.500 1.950 0 3.730.72 5.120 1.880L13 16h9V7l-3.600 3.600z"/></svg>
<svg class="abs" style="left:83.0px;top:178.0px" width="18" height="18" viewBox="0 0 24 24"><path fill="#3c4043" d="M19 8H5c-1.660 0-3 1.340-3 3v6h4v4h12v-4h4v-6c0-1.660-1.340-3-3-3zm-3 11H8v-5h8v5zm3-7c-.55 0-1-.45-1-1s.45-1 1-1 1 .45 1 1-.45 1-1 1zm-1-9H6v4h12V3z"/></svg>
<svg class="abs" style="left:111.5px;top:178.5px" width="18" height="18" viewBox="0 0 24 24"><path fill="#3c4043" d="M12.450 16h2.090L9.430 3H7.570L2.460 16h2.090l1.120-3h5.640l1.140 3zm-6.020-5L8.500 5.480 10.570 11H6.430zm15.160.59l-8.090 8.090L9.830 16l-1.410 1.410 5.090 5.090L23 13l-1.410-1.410z"/></svg>
<svg class="abs" style="left:139.5px;top:178.0px" width="18" height="18" viewBox="0 0 24 24"><path fill="#3c4043" d="M18 4V3c0-.55-.45-1-1-1H5c-.55 0-1 .45-1 1v4c0 .55.45 1 1 1h12c.55 0 1-.45 1-1V6h1v4H9v11c0 .55.45 1 1 1h2c.55 0 1-.45 1-1v-9h8V4h-3z"/></svg>
<div class="tsp" style="left:166.0px"></div>
<div class="tsp" style="left:240.0px"></div>
<div class="tsp" style="left:354.0px"></div>
<div class="tsp" style="left:467.5px"></div>
<div class="tsp" style="left:542.0px"></div>
<div class="tsp" style="left:695.0px"></div>
<div class="tsp" style="left:798.5px"></div>
<div class="tsp" style="left:919.5px"></div>
<div class="tsp" style="left:958.5px"></div>
<div class="tsp" style="left:1116.5px"></div>
<div class="tsp" style="left:1152.5px"></div>
<div class="tsp" style="left:1827.0px"></div>
<div class="tbtxt" style="left:182.5px;top:179px">100%</div>
<div class="caret" style="left:224.0px;top:185.5px;border-top-color:#444"></div>
<div class="tbtxt" style="left:257.5px;top:179px">Normal text</div>
<div class="caret" style="left:337.0px;top:185.5px;border-top-color:#444"></div>
<div class="tbtxt" style="left:371.5px;top:179px">Arial</div>
<div class="caret" style="left:450.5px;top:185.5px;border-top-color:#444"></div>
<div class="tbtxt" style="left:484.5px;top:179px">11</div>
<div class="caret" style="left:525.5px;top:185.5px;border-top-color:#444"></div>
<svg class="abs" style="left:550.2px;top:176.8px" width="20.5" height="20.5" viewBox="0 0 24 24"><path fill="#3c4043" d="M15.600 10.790c.97-.67 1.650-1.770 1.650-2.790 0-2.260-1.750-4-4-4H7v14h7.040c2.090 0 3.710-1.700 3.710-3.790 0-1.520-.86-2.820-2.150-3.420zM10 6.500h3c.83 0 1.500.67 1.500 1.500s-.67 1.500-1.500 1.500h-3v-3zm3.500 9H10v-3h3.500c.83 0 1.500.67 1.500 1.500s-.67 1.500-1.500 1.500z"/></svg>
<svg class="abs" style="left:578.2px;top:176.8px" width="20.5" height="20.5" viewBox="0 0 24 24"><path fill="#3c4043" d="M10 4v3h2.210l-3.420 8H6v3h8v-3h-2.210l3.420-8H18V4z"/></svg>
<svg class="abs" style="left:607.0px;top:178.0px" width="20" height="20" viewBox="0 0 24 24"><path fill="#3c4043" d="M12 17c3.310 0 6-2.690 6-6V3h-2.500v8c0 1.930-1.570 3.500-3.500 3.500S8.500 12.930 8.500 11V3H6v8c0 3.310 2.690 6 6 6zm-7 2v2h14v-2H5z"/></svg>
<svg class="abs" style="left:635px;top:176px" width="22" height="24" viewBox="0 0 22 24"><path fill="#3c4043" d="M10 3.500 5.500 14.500h1.900l1-2.600h5.200l1 2.600h1.900L12 3.500zm-1 6.800L11 5.300l2 5z"/><rect x="0" y="19" width="22" height="3.500" fill="#1f1f1f"/></svg>
<svg class="abs" style="left:667px;top:178px" width="18" height="18" viewBox="0 0 18 18"><path fill="#3c4043" d="M12.200 1.200 16.800 5.800 9.300 13.300H4.700V8.700zM1.500 15.800 4 13.300l1.700 1.700-.8.800z"/></svg>
<svg class="abs" style="left:703.5px;top:177.5px" width="20" height="20" viewBox="0 0 24 24"><path fill="#3c4043" d="M3.900 12c0-1.710 1.390-3.100 3.100-3.100h4V7H7c-2.760 0-5 2.240-5 5s2.240 5 5 5h4v-1.900H7c-1.710 0-3.100-1.390-3.100-3.100zM8 13h8v-2H8v2zm9-6h-4v1.900h4c1.710 0 3.100 1.390 3.100 3.100s-1.390 3.100-3.100 3.100h-4V17h4c2.760 0 5-2.240 5-5s-2.240-5-5-5z"/></svg>
<svg class="abs" style="left:732.2px;top:178.2px" width="19.5" height="19.5" viewBox="0 0 24 24"><path fill="#3c4043" d="M22 4c0-1.100-.9-2-2-2H4c-1.100 0-2 .9-2 2v12c0 1.100.9 2 2 2h14l4 4V4zm-5 7h-4v4h-2v-4H7V9h4V5h2v4h4v2z"/></svg>
<svg class="abs" style="left:758.8px;top:177.2px" width="20.5" height="20.5" viewBox="0 0 24 24"><path fill="#3c4043" d="M21 19V5c0-1.100-.9-2-2-2H5c-1.100 0-2 .9-2 2v14c0 1.100.9 2 2 2h14c1.100 0 2-.9 2-2zM8.500 13.500l2.500 3.010L14.500 12l4.500 6H5l3.500-4.500z"/></svg>
<div class="caret" style="left:782.0px;top:185.5px;border-top-color:#444"></div>
<div class="abs" style="left:805.500px;top:174px;width:25px;height:26px;border-radius:2px;background:#e8f0fe"></div>
<svg class="abs" style="left:809.0px;top:178.5px" width="18" height="18" viewBox="0 0 24 24"><path fill="#1a73e8" d="M15 15H3v2h12v-2zm0-8H3v2h12V7zM3 13h18v-2H3v2zm0 8h18v-2H3v2zM3 3v2h18V3H3z"/></svg>
<svg class="abs" style="left:837.0px;top:178.5px" width="18" height="18" viewBox="0 0 24 24"><path fill="#3c4043" d="M7 15v2h10v-2H7zm-4 6h18v-2H3v2zm0-8h18v-2H3v2zm4-6v2h10V7H7zM3 3v2h18V3H3z"/></svg>
<svg class="abs" style="left:865.0px;top:178.5px" width="18" height="18" viewBox="0 0 24 24"><path fill="#3c4043" d="M3 21h18v-2H3v2zm6-4h12v-2H9v2zm-6-4h18v-2H3v2zm6-4h12V7H9v2zM3 3v2h18V3H3z"/></svg>
<svg class="abs" style="left:893.0px;top:178.5px" width="18" height="18" viewBox="0 0 24 24"><path fill="#3c4043" d="M3 21h18v-2H3v2zm0-4h18v-2H3v2zm0-4h18v-2H3v2zm0-4h18V7H3v2zm0-6v2h18V3H3z"/></svg>
<svg class="abs" style="left:930.0px;top:177.5px" width="20" height="20" viewBox="0 0 24 24"><path fill="#3c4043" d="M6 7h2.500L5 3.500 1.500 7H4v10H1.500L5 20.500 8.500 17H6V7zm4-2v2h12V5H10zm0 14h12v-2H10v2zm0-6h12v-2H10v2z"/></svg>
<div class="abs" style="left:965px;top:174px;width:28px;height:26px;border-radius:2px;background:#e8f0fe"></div>
<svg class="abs" style="left:969.0px;top:177.0px" width="20" height="20" viewBox="0 0 24 24"><path fill="#1a73e8" d="M2 17h2v.5H3v1h1v.5H2v1h3v-4H2v1zm1-9h1V4H2v1h1v3zm-1 3h1.800L2 13.100v.9h3v-1H3.200L5 10.900V10H2v1zm5-6v2h14V5H7zm0 14h14v-2H7v2zm0-6h14v-2H7v2z"/></svg>
<div class="caret" style="left:996.5px;top:185.5px;border-top-color:#444"></div>
<svg class="abs" style="left:1015.5px;top:177.0px" width="20" height="20" viewBox="0 0 24 24"><path fill="#3c4043" d="M4 10.500c-.83 0-1.500.67-1.500 1.500s.67 1.500 1.500 1.500 1.500-.67 1.500-1.500-.67-1.500-1.500-1.500zm0-6c-.83 0-1.500.67-1.500 1.500S3.170 7.500 4 7.500 5.500 6.830 5.500 6 4.830 4.500 4 4.500zm0 12c-.83 0-1.500.68-1.500 1.500s.68 1.500 1.500 1.500 1.500-.68 1.500-1.500-.67-1.500-1.500-1.500zM7 19h14v-2H7v2zm0-6h14v-2H7v2zm0-8v2h14V5H7z"/></svg>
<div class="caret" style="left:1042.5px;top:185.5px;border-top-color:#444"></div>
<svg class="abs" style="left:1060.2px;top:177.2px" width="19.5" height="19.5" viewBox="0 0 24 24"><path fill="#3c4043" d="M11 17h10v-2H11v2zm-8-5l4 4V8l-4 4zm0 9h18v-2H3v2zM3 3v2h18V3H3zm8 6h10V7H11v2zm0 4h10v-2H11v2z"/></svg>
<svg class="abs" style="left:1088.2px;top:177.2px" width="19.5" height="19.5" viewBox="0 0 24 24"><path fill="#3c4043" d="M3 21h18v-2H3v2zM3 8v8l4-4-4-4zm8 9h10v-2H11v2zM3 3v2h18V3H3zm8 6h10V7H11v2zm0 4h10v-2H11v2z"/></svg>
<svg class="abs" style="left:1126.0px;top:177.5px" width="18" height="18" viewBox="0 0 24 24"><path fill="#3c4043" d="M3.270 5L2 6.270l6.970 6.970L6.500 19h3l1.570-3.660L16.730 21 18 19.730 3.550 5.270 3.270 5zM6 5v.18L8.820 8h2.400l-.72 1.680 2.100 2.100L14.210 8H20V5H6z"/></svg>
<svg class="abs" style="left:1162px;top:177px" width="18" height="18" viewBox="0 0 24 24"><path fill="#3c4043" d="M16.560 8.940L7.620 0 6.210 1.410l2.380 2.380-5.150 5.150c-.59.590-.59 1.540 0 2.120l5.500 5.500c.29.290.68.440 1.060.44s.77-.15 1.060-.44l5.500-5.500c.59-.58.59-1.530 0-2.120zM5.210 10L10 5.210 14.790 10H5.210zM19 11.500s-2 2.170-2 3.500c0 1.100.9 2 2 2s2-.9 2-2c0-1.330-2-3.500-2-3.500z"/></svg>
<div class="caret" style="left:1184.0px;top:187.0px;border-top-color:#444"></div>
<svg class="abs" style="left:1203.500px;top:178.500px" width="16" height="16" viewBox="0 0 24 24"><path fill="#3c4043" d="M17.750 7L14 3.250l-10 10V17h3.750l10-10zm2.960-2.960c.39-.39.390-1.020 0-1.410L18.370.290c-.39-.39-1.020-.39-1.410 0L15 2.250 18.750 6l1.960-1.960z"/></svg>
<div class="abs" style="left:1199.500px;top:195px;width:21px;height:3.500px;background:#000"></div>
<div class="caret" style="left:1223.0px;top:187.0px;border-top-color:#444"></div>
<svg class="abs" style="left:1242.0px;top:178.5px" width="18" height="18" viewBox="0 0 24 24"><path fill="#3c4043" d="M3 17h18v-2H3v2zm0 3h18v-1H3v1zm0-7h18v-3H3v3zm0-9v4h18V4H3z"/></svg>
<svg class="abs" style="left:1272.0px;top:178.5px" width="18" height="18" viewBox="0 0 24 24"><path fill="#3c4043" d="M3 16h5v-2H3v2zm6.500 0h5v-2h-5v2zm6.500 0h5v-2h-5v2zM3 20h2v-2H3v2zm4 0h2v-2H7v2zm4 0h2v-2h-2v2zm4 0h2v-2h-2v2zm4 0h2v-2h-2v2zM3 12h8v-2H3v2zm10 0h8v-2h-8v2zM3 4v4h18V4H3z"/></svg>
<svg class="abs" style="left:1701.0px;top:178.0px" width="18" height="18" viewBox="0 0 24 24"><path fill="#3c4043" d="M14.060 9.020l.92.920L5.920 19H5v-.92l9.060-9.060M17.660 3c-.25 0-.51.100-.7.290l-1.830 1.830 3.750 3.750 1.830-1.830c.39-.39.390-1.020 0-1.410l-2.340-2.340c-.2-.2-.45-.29-.71-.29zm-3.600 3.190L3 17.250V21h3.750L17.810 9.940l-3.750-3.750z"/></svg>
<div class="tbtxt" style="left:1725px;top:179px">Editing</div>
<div class="caret" style="left:1810.0px;top:185.5px;border-top-color:#444"></div>
<svg class="abs" style="left:1834.0px;top:175.0px" width="24" height="24" viewBox="0 0 24 24"><path fill="#3c4043" d="M12 8l-6 6 1.410 1.410L12 10.830l4.590 4.580L18 14z"/></svg>
<div class="abs" id="ruler"></div><div class="abs" id="rulerw"></div>
<svg class="abs" style="left:0;top:207px" width="1920" height="13" fill="#9aa0a6"><rect x="516.0" y="5.5" width="1" height="3"/><rect x="528.0" y="5.5" width="1" height="3"/><rect x="540.0" y="5.5" width="1" height="3"/><rect x="552.0" y="3.5" width="1" height="7"/><rect x="564.0" y="5.5" width="1" height="3"/><rect x="576.0" y="5.5" width="1" height="3"/><rect x="588.0" y="5.5" width="1" height="3"/><rect x="612.0" y="5.5" width="1" height="3"/><rect x="624.0" y="5.5" width="1" height="3"/><rect x="636.0" y="5.5" width="1" height="3"/><rect x="648.0" y="3.5" width="1" height="7"/><rect x="660.0" y="5.5" width="1" height="3"/><rect x="672.0" y="5.5" width="1" height="3"/><rect x="684.0" y="5.5" width="1" height="3"/><rect x="708.0" y="5.5" width="1" height="3"/><rect x="720.0" y="5.5" width="1" height="3"/><rect x="732.0" y="5.5" width="1" height="3"/><rect x="744.0" y="3.5" width="1" height="7"/><rect x="756.0" y="5.5" width="1" height="3"/><rect x="768.0" y="5.5" width="1" height="3"/><rect x="780.0" y="5.5" width="1" height="3"/><rect x="804.0" y="5.5" width="1" height="3"/><rect x="816.0" y="5.5" width="1" height="3"/><rect x="828.0" y="5.5" width="1" height="3"/><rect x="840.0" y="3.5" width="1" height="7"/><rect x="852.0" y="5.5" width="1" height="3"/><rect x="864.0" y="5.5" width="1" height="3"/><rect x="876.0" y="5.5" width="1" height="3"/><rect x="900.0" y="5.5" width="1" height="3"/><rect x="912.0" y="5.5" width="1" height="3"/><rect x="924.0" y="5.5" width="1" height="3"/><rect x="936.0" y="3.5" width="1" height="7"/><rect x="948.0" y="5.5" width="1" height="3"/><rect x="960.0" y="5.5" width="1" height="3"/><rect x="972.0" y="5.5" width="1" height="3"/><rect x="996.0" y="5.5" width="1" height="3"/><rect x="1008.0" y="5.5" width="1" height="3"/><rect x="1020.0" y="5.5" width="1" height="3"/><rect x="1032.0" y="3.5" width="1" height="7"/><rect x="1044.0" y="5.5" width="1" height="3"/><rect x="1056.0" y="5.5" width="1" height="3"/><rect x="1068.0" y="5.5" width="1" height="3"/><rect x="1092.0" y="5.5" width="1" height="3"/><rect x="1104.0" y="5.5" width="1" height="3"/><rect x="1116.0" y="5.5" width="1" height="3"/><rect x="1128.0" y="3.5" width="1" height="7"/><rect x="1140.0" y="5.5" width="1" height="3"/><rect x="1152.0" y="5.5" width="1" height="3"/><rect x="1164.0" y="5.5" width="1" height="3"/><rect x="1188.0" y="5.5" width="1" height="3"/><rect x="1200.0" y="5.5" width="1" height="3"/><rect x="1212.0" y="5.5" width="1" height="3"/><rect x="1224.0" y="3.5" width="1" height="7"/><rect x="1236.0" y="5.5" width="1" height="3"/><rect x="1248.0" y="5.5" width="1" height="3"/><rect x="1260.0" y="5.5" width="1" height="3"/><rect x="1284.0" y="5.5" width="1" height="3"/><rect x="1296.0" y="5.5" width="1" height="3"/><rect x="1308.0" y="5.5" width="1" height="3"/><rect x="1320.0" y="3.5" width="1" height="7"/></svg>
<div class="rnum" style="left:498.5px">1</div>
<div class="rnum" style="left:690.5px">1</div>
<div class="rnum" style="left:786.5px">2</div>
<div class="rnum" style="left:882.5px">3</div>
<div class="rnum" style="left:978.5px">4</div>
<div class="rnum" style="left:1074.5px">5</div>
<div class="rnum" style="left:1170.5px">6</div>
<div class="rnum" style="left:1266.5px">7</div>
<div class="abs" style="left:721px;top:208px;width:12px;height:4px;background:#4285f4"></div>
<div class="abs" style="left:745px;top:213px;width:0;height:0;border-left:6.500px solid transparent;border-right:6.500px solid transparent;border-top:7px solid #4285f4"></div>
<div class="abs" style="left:1211px;top:213px;width:0;height:0;border-left:6.500px solid transparent;border-right:6.500px solid transparent;border-top:7px solid #4285f4"></div>
<div class="abs" id="docbg"></div><div class="abs" id="vruler"></div><div class="abs" id="vrulerg"></div>
<svg class="abs" style="left:5px;top:220px" width="9" height="770" fill="#a8acb0"><rect x="0" y="11" width="3" height="1"/><rect x="0" y="35" width="3" height="1"/><rect x="0" y="47" width="3" height="1"/><rect x="0" y="59" width="3" height="1"/><rect x="0" y="71" width="5" height="1"/><rect x="0" y="83" width="3" height="1"/><rect x="0" y="95" width="3" height="1"/><rect x="0" y="107" width="3" height="1"/><rect x="0" y="131" width="3" height="1"/><rect x="0" y="143" width="3" height="1"/><rect x="0" y="155" width="3" height="1"/><rect x="0" y="167" width="5" height="1"/><rect x="0" y="179" width="3" height="1"/><rect x="0" y="191" width="3" height="1"/><rect x="0" y="203" width="3" height="1"/><rect x="0" y="227" width="3" height="1"/><rect x="0" y="239" width="3" height="1"/><rect x="0" y="251" width="3" height="1"/><rect x="0" y="263" width="5" height="1"/><rect x="0" y="275" width="3" height="1"/><rect x="0" y="287" width="3" height="1"/><rect x="0" y="299" width="3" height="1"/><rect x="0" y="323" width="3" height="1"/><rect x="0" y="335" width="3" height="1"/><rect x="0" y="347" width="3" height="1"/><rect x="0" y="359" width="5" height="1"/><rect x="0" y="371" width="3" height="1"/><rect x="0" y="383" width="3" height="1"/><rect x="0" y="395" width="3" height="1"/><rect x="0" y="419" width="3" height="1"/><rect x="0" y="431" width="3" height="1"/><rect x="0" y="443" width="3" height="1"/><rect x="0" y="455" width="5" height="1"/><rect x="0" y="467" width="3" height="1"/><rect x="0" y="479" width="3" height="1"/><rect x="0" y="491" width="3" height="1"/><rect x="0" y="515" width="3" height="1"/><rect x="0" y="527" width="3" height="1"/><rect x="0" y="539" width="3" height="1"/><rect x="0" y="551" width="5" height="1"/><rect x="0" y="563" width="3" height="1"/><rect x="0" y="575" width="3" height="1"/><rect x="0" y="587" width="3" height="1"/><rect x="0" y="611" width="3" height="1"/><rect x="0" y="623" width="3" height="1"/><rect x="0" y="635" width="3" height="1"/><rect x="0" y="647" width="5" height="1"/><rect x="0" y="659" width="3" height="1"/><rect x="0" y="671" width="3" height="1"/><rect x="0" y="683" width="3" height="1"/><rect x="0" y="707" width="3" height="1"/><rect x="0" y="719" width="3" height="1"/><rect x="0" y="731" width="3" height="1"/><rect x="0" y="743" width="5" height="1"/><rect x="0" y="755" width="3" height="1"/><rect x="0" y="767" width="3" height="1"/></svg>
<div class="abs" style="left:13px;top:220px;width:1px;height:770px;background:#d4d6d9"></div>
<div class="abs" style="left:2.500px;top:237px;width:12px;height:12px;font-size:9px;line-height:12px;color:#3c4043;text-align:center;transform:rotate(-90deg)">2</div>
<div class="abs" style="left:2.500px;top:333px;width:12px;height:12px;font-size:9px;line-height:12px;color:#3c4043;text-align:center;transform:rotate(-90deg)">3</div>
<div class="abs" style="left:2.500px;top:429px;width:12px;height:12px;font-size:9px;line-height:12px;color:#3c4043;text-align:center;transform:rotate(-90deg)">4</div>
<div class="abs" style="left:2.500px;top:525px;width:12px;height:12px;font-size:9px;line-height:12px;color:#3c4043;text-align:center;transform:rotate(-90deg)">5</div>
<div class="abs" style="left:2.500px;top:621px;width:12px;height:12px;font-size:9px;line-height:12px;color:#3c4043;text-align:center;transform:rotate(-90deg)">6</div>
<div class="abs" style="left:2.500px;top:717px;width:12px;height:12px;font-size:9px;line-height:12px;color:#3c4043;text-align:center;transform:rotate(-90deg)">7</div>
<div class="abs" style="left:2.500px;top:813px;width:12px;height:12px;font-size:9px;line-height:12px;color:#3c4043;text-align:center;transform:rotate(-90deg)">8</div>
<div class="abs" style="left:2.500px;top:909px;width:12px;height:12px;font-size:9px;line-height:12px;color:#3c4043;text-align:center;transform:rotate(-90deg)">9</div>
<div class="abs" id="page"></div>
<div class="abs" style="left:5px;top:220px;width:1859px;height:6px;background:linear-gradient(rgba(60,64,67,.2),rgba(60,64,67,.06) 50%,rgba(60,64,67,0))"></div>
<svg class="abs" style="left:34px;top:252px" width="18" height="18" viewBox="0 0 18 18"><rect x="1" y="1" width="16" height="16" rx="1.500" fill="none" stroke="#9aa0a6" stroke-width="1.800"/><path d="M4 4.600h2v2H4zM7.500 4.600H14v2H7.500zM4 8h2v2H4zM7.500 8H14v2H7.500zM4 11.400h2v2H4zM7.500 11.400H14v2H7.500z" fill="#9aa0a6"/></svg>
<div class="abs" style="left:1852px;top:423px;width:8px;height:400px;border-radius:4px;background:#dadce0"></div>
<div class="abs" id="side"></div>
<svg class="abs" style="left:1884px;top:188px" width="17" height="18" viewBox="0 0 17 18"><rect x="1.500" y="0" width="14" height="4" fill="#c6c9cf"/><path d="M0 2.500h17l-.8 6 .8 9.500H0l.8-9.500z" fill="#4285f4"/><path d="M0 2.500h17l-.3 2.500H.3z" fill="#3367d6"/><text x="8.500" y="15" font-family="Liberation Sans,sans-serif" font-size="9" fill="#fff" text-anchor="middle">31</text></svg>
<svg class="abs" style="left:1884px;top:243px" width="17" height="17" viewBox="0 0 17 17"><path d="M1.500 0h14c.8 0 1.500.7 1.500 1.500V12l-5 5H1.500C.7 17 0 16.300 0 15.500v-14C0 .7.700 0 1.500 0z" fill="#f9ab00"/><path d="M12 17v-3.500c0-.8.700-1.500 1.500-1.500H17z" fill="#fde293"/><path d="M8.500 3.200a3.300 3.300 0 0 0-1.700 6.100v1.200h3.400V9.300a3.300 3.300 0 0 0-1.700-6.100zM7 11.500h3v1H7z" fill="none" stroke="#fff" stroke-width="1"/></svg>
<svg class="abs" style="left:1883px;top:299px" width="19" height="19" viewBox="0 0 19 19"><circle cx="9.500" cy="9.500" r="9.500" fill="#4285f4"/><path d="M6.500 12.800 13 5.500" stroke="#fff" stroke-width="2.600" stroke-linecap="round"/><circle cx="4.800" cy="10" r="1.500" fill="#fbbc04"/></svg>
<div class="lnum" style="left:625px;top:219px">3.</div>
<div class="doc" style="left:649px;top:217px;">From the top left menu: Go to <b>Runtime</b> &gt; <b>Change runtime type</b> &gt; select <b>GPU</b> from</div>
<div class="doc" style="left:649px;top:237px;"><b>hardware accelerator.</b> Some pretrained models support TPU. The pretrained model we</div>
<div class="doc" style="left:649px;top:257px;">are choosing in this project only supports GPU.</div>
<div class="lnum" style="left:625px;top:279px">4.</div>
<div class="doc" style="left:649px;top:277px;">(Highly Recommended) Mount Google Drive to the Colab notebook:</div>
<div class="abs" style="left:649px;top:357px;width:577px;height:441px;border:1px solid #000"></div>
<div class="abs" style="left:649px;top:656px;width:577px;height:1px;background:#000"></div>
<div class="t16" style="left:656px;top:365px;"><b style="font-size:14.667px">WHY?</b></div>
<div class="t16" style="left:656px;top:384px;">When training starts, checkpoints, logs and many other important files will be</div>
<div class="t16" style="left:656px;top:403px;">created. When the kernel disconnects, these files, along with everything else,</div>
<div class="t16" style="left:656px;top:422px;">will be deleted if they don’t get saved on your Google Drive or somewhere else.</div>
<div class="t16" style="left:656px;top:441px;"><span class="hl">The kernel disconnects shortly after your computer sleeps or after using the</span></div>
<div class="t16" style="left:656px;top:460px;"><span class="hl">Colab <b>GPU</b> for 12 hours. Training will need to be restarted from zero if the</span></div>
<div class="t16" style="left:656px;top:479px;"><span class="hl">trained model did not get saved.² <span class="bl">--&gt; THIS MEANS you may be training in time</span></span></div>
<div class="t16" style="left:656px;top:498px;"><span class="hl bl">“segments” meaning you have 12 hours and you should before the end (ideally</span></div>
<div class="t16" style="left:656px;top:517px;"><span class="hl bl">near it) save a check point and then restart kernel/colab but, now not from</span></div>
<div class="t16" style="left:656px;top:536px;"><span class="hl bl">beginning but this saved checkpoint.&nbsp; You will then train for another 12 hours</span></div>
<div class="t16" style="left:656px;top:555px;"><span class="hl bl">and so on until you are satisfied or reached the total number of steps in training</span></div>
<div class="t16" style="left:656px;top:574px;"><span class="hl bl">desired.</span></div>
<div class="t16" style="left:656px;top:612px;">I also <b>highly</b> recommend downloading <span class="bl">Google Backup and Sync app</span> so it’s</div>
<div class="t16" style="left:656px;top:631px;">easier to move and edit files as well as to keep everything synchronized.</div>
<svg class="abs" style="left:762px;top:532px" width="82" height="4" viewBox="0 0 82 4"><path d="M0 3 L2 1 L4 3 L6 1 L8 3 L10 1 L12 3 L14 1 L16 3 L18 1 L20 3 L22 1 L24 3 L26 1 L28 3 L30 1 L32 3 L34 1 L36 3 L38 1 L40 3 L42 1 L44 3 L46 1 L48 3 L50 1 L52 3 L54 1 L56 3 L58 1 L60 3 L62 1 L64 3 L66 1 L68 3 L70 1 L72 3 L74 1 L76 3 L78 1 L80 3" fill="none" stroke="#4a86e8" stroke-width="1"/></svg>
<div class="doc" style="left:656px;top:664px;line-height:18px"><b>HOW TO DO</b></div>
<div class="doc" style="left:728.5px;top:701px;line-height:18px">1.</div>
<div class="doc" style="left:752px;top:701px;line-height:18px">Install <span class="bl" style="text-decoration:underline">Google Backup and Sync app</span></div>
<div class="doc" style="left:728.5px;top:719px;line-height:18px">2.</div>
<div class="doc" style="left:752px;top:719px;line-height:18px">Run it and sign in with google account via option for browser (see</div>
<div class="doc" style="left:752px;top:737px;line-height:18px">bottom of app if having trouble sign in with browser)</div>
<div class="doc" style="left:728.5px;top:755px;line-height:18px">3.</div>
<div class="doc" style="left:752px;top:755px;line-height:18px">Setup up for PC and point ONLY to the folder containing your project</div>
<div class="doc" style="left:752px;top:773px;line-height:18px">you wish to synch (save on Google)</div>
<div class="abs" style="left:984.500px;top:773px;width:1.500px;height:17px;background:#000"></div>
<div class="abs" style="left:856px;top:700px;width:2px;height:18px;background:#ff0a78"></div><div class="abs" style="left:854px;top:698px;width:6px;height:5px;background:#ff0a78"></div>
<div class="abs" style="left:864px;top:700px;width:2px;height:18px;background:#ff0a78"></div><div class="abs" style="left:862px;top:698px;width:6px;height:5px;background:#ff0a78"></div>
<div class="abs" style="left:937px;top:700px;width:2px;height:18px;background:#00a0b0"></div><div class="abs" style="left:935px;top:698px;width:6px;height:5px;background:#00a0b0"></div>
<div class="abs" style="left:1211px;top:660px;width:12px;height:12px;border:1px solid #e0e0e0;background:#fff"></div><div class="abs" style="left:1213px;top:665px;width:0;height:0;border-left:4px solid transparent;border-right:4px solid transparent;border-top:4px solid #bdbdbd"></div>
<div class="lnum" style="left:625px;top:800px;color:#222">5</div><div class="abs" style="left:635px;top:810px;width:2px;height:2px;background:#555"></div>
<div class="lnum" style="left:625px;top:857px;color:#222">6.</div>
<div class="abs" id="dlbar"></div>
<div class="dl" style="left:49px;letter-spacing:-0.18px">installbackupan....exe</div>
<svg class="abs" style="left:19px;top:1006px" width="18" height="18"><use href="#i-exe"/></svg>
<svg class="abs" style="left:201.5px;top:1012px" width="10" height="7" viewBox="0 0 10 7"><path d="M.7 6 5 1.500 9.300 6" fill="none" stroke="#5f6368" stroke-width="1.400"/></svg>
<div class="dlsep" style="left:230.0px"></div>
<div class="dl" style="left:276.5px;letter-spacing:-0.35px">187763_419873....zip</div>
<svg class="abs" style="left:246.5px;top:1005px" width="18" height="18"><use href="#i-zip"/></svg>
<svg class="abs" style="left:429.0px;top:1012px" width="10" height="7" viewBox="0 0 10 7"><path d="M.7 6 5 1.500 9.300 6" fill="none" stroke="#5f6368" stroke-width="1.400"/></svg>
<div class="dlsep" style="left:457.5px"></div>
<div class="dl" style="left:503px;letter-spacing:-0.28px">Carl Database.zip</div>
<svg class="abs" style="left:473px;top:1005px" width="18" height="18"><use href="#i-zip"/></svg>
<svg class="abs" style="left:655.5px;top:1012px" width="10" height="7" viewBox="0 0 10 7"><path d="M.7 6 5 1.500 9.300 6" fill="none" stroke="#5f6368" stroke-width="1.400"/></svg>
<div class="dlsep" style="left:684.0px"></div>
<div class="dl" style="left:730px;letter-spacing:-0.82px">FLIR_ADAS_1_3....002</div>
<svg class="abs" style="left:702.5px;top:1007px" width="14" height="16"><use href="#i-file"/></svg>
<svg class="abs" style="left:882.5px;top:1012px" width="10" height="7" viewBox="0 0 10 7"><path d="M.7 6 5 1.500 9.300 6" fill="none" stroke="#5f6368" stroke-width="1.400"/></svg>
<div class="dlsep" style="left:911.0px"></div>
<div class="dl" style="left:957px;letter-spacing:-0.82px">FLIR_ADAS_1_3....004</div>
<svg class="abs" style="left:929.5px;top:1007px" width="14" height="16"><use href="#i-file"/></svg>
<svg class="abs" style="left:1109.5px;top:1012px" width="10" height="7" viewBox="0 0 10 7"><path d="M.7 6 5 1.500 9.300 6" fill="none" stroke="#5f6368" stroke-width="1.400"/></svg>
<div class="dlsep" style="left:1138.0px"></div>
<div class="dl" style="left:1184px;letter-spacing:-0.82px">FLIR_ADAS_1_3....003</div>
<svg class="abs" style="left:1156.5px;top:1007px" width="14" height="16"><use href="#i-file"/></svg>
<svg class="abs" style="left:1336.5px;top:1012px" width="10" height="7" viewBox="0 0 10 7"><path d="M.7 6 5 1.500 9.300 6" fill="none" stroke="#5f6368" stroke-width="1.400"/></svg>
<div class="dlsep" style="left:1365.0px"></div>
<div class="dl" style="left:1411px;letter-spacing:-0.82px">FLIR_ADAS_1_3....001</div>
<svg class="abs" style="left:1383.5px;top:1007px" width="14" height="16"><use href="#i-file"/></svg>
<svg class="abs" style="left:1563.5px;top:1012px" width="10" height="7" viewBox="0 0 10 7"><path d="M.7 6 5 1.500 9.300 6" fill="none" stroke="#5f6368" stroke-width="1.400"/></svg>
<div class="dlsep" style="left:1592.0px"></div>
<div class="abs" style="left:1798px;top:997px;width:86px;height:32px;border:1px solid #dadce0;border-radius:4px;background:#fff"></div>
<div class="abs" style="left:1814px;top:1006.500px;font-size:13px;line-height:16px;color:#3c4043;white-space:nowrap;letter-spacing:0.45px">Show all</div>
<svg class="abs" style="left:1897px;top:1010.500px" width="11" height="11" viewBox="0 0 11 11"><path d="M1 1l9 9M10 1l-9 9" stroke="#5f6368" stroke-width="1.400"/></svg>
<div class="abs" style="left:1700px;top:583px;width:220px;height:386px;background:#141414"></div>
<svg class="abs" style="left:1703px;top:586px" width="217" height="126" viewBox="0 0 217 126"><defs><filter id="b1" x="-5%" y="-5%" width="110%" height="110%"><feGaussianBlur stdDeviation="1.300"/></filter><filter id="b3" x="-10%" y="-10%" width="120%" height="120%"><feGaussianBlur stdDeviation="3"/></filter><linearGradient id="wl" x1="0" y1="0" x2="0" y2="1"><stop offset="0" stop-color="#d2cbb9"/><stop offset=".55" stop-color="#c3b9a4"/><stop offset="1" stop-color="#a8947c"/></linearGradient><radialGradient id="fc" cx=".45" cy=".4" r=".65"><stop offset="0" stop-color="#d9b49c"/><stop offset=".6" stop-color="#c79f86"/><stop offset="1" stop-color="#a87f68"/></radialGradient><linearGradient id="hr" x1="0" y1="0" x2="1" y2="0"><stop offset="0" stop-color="#80684a"/><stop offset=".5" stop-color="#a08a68"/><stop offset="1" stop-color="#bcae92"/></linearGradient><clipPath id="c1"><rect width="217" height="126"/></clipPath></defs><g clip-path="url(#c1)"><rect width="217" height="126" fill="#c4bca8"/><g filter="url(#b1)"><rect x="-5" y="-5" width="175" height="136" fill="url(#wl)"/><path d="M2 40 50 -2 58 -2 4 48z" fill="#e6e2d6"/><path d="M-2 30 30 -2 36 -2 -2 36z" fill="#dcd6c6"/><path d="M10 52 34 36 34 66 10 68z" fill="#b4b8bc"/><path d="M14 54 30 44 30 52 14 62z" fill="#dfe3e6"/><path d="M5 42l30-22 2 4L8 46z" fill="#efeee8"/><rect x="-2" y="67" width="33" height="17" fill="#3a2c22"/><rect x="-2" y="84" width="40" height="16" fill="#c4b49c"/><rect x="138" y="-5" width="24" height="136" fill="#c9c5b2"/><rect x="157" y="-5" width="9" height="136" fill="#e2e2da"/><rect x="166" y="-5" width="60" height="136" fill="#fbfcf8"/><path d="M176 52c6-8 14-4 20-8s14-2 24-4v36h-44z" fill="#cfe0c0"/><path d="M186 58c6-4 10 0 16-3s10-2 18-2v20h-34z" fill="#a8c490" opacity=".6"/><rect x="168" y="75" width="52" height="11" fill="#5c544a"/><path d="M168 80h52" stroke="#d8d8d0" stroke-width="2" stroke-dasharray="2 3"/><rect x="168" y="86" width="52" height="9" fill="#f4f4ee"/><rect x="168" y="95" width="52" height="6" fill="#7c746a"/><rect x="166" y="114" width="54" height="14" fill="#b4b8b4"/><path d="M14 126c2-18 18-26 44-28l20 30z" fill="#a8866c"/><path d="M120 100c20-4 46 6 62 26h-70z" fill="#cfae96"/><path d="M50 0C36 14 34 34 30 52s-4 36 8 44 28 4 34-6L150 92c8-10 6-30 2-48S146 10 130 -2z" fill="url(#hr)"/><path d="M128 0c12 10 18 30 20 50s2 36-8 44l-10-20z" fill="#b4a486"/><rect x="76" y="90" width="50" height="40" fill="#b88e76"/><path d="M64 30C64 10 80 4 98 4s36 8 36 30c0 10-1 24-5 40s-14 34-32 34S70 92 66 74 64 40 64 30z" fill="url(#fc)"/><path d="M62 8C72 -2 120 -4 134 10c2 8 0 16-2 20C120 10 84 8 68 30c-4-4-8-14-6-22z" fill="#9a8260"/><path d="M76 50q9-4 18 0v3q-9-2-18 0zM112 50q8-4 16 0v3q-8-2-16 0z" fill="#6a4c3c"/><path d="M74 44q10-5 20-1M110 43q10-4 20 1" stroke="#8a6a52" stroke-width="2" fill="none"/><ellipse cx="106" cy="74" rx="7" ry="5" fill="#b48670"/><path d="M92 92q13 4 26 0v3q-13 4-26 0z" fill="#a46c62"/><path d="M44 100l5 0 -3 28h-6z" fill="#e8e8e4"/><path d="M49 100l4 0-3 28h-4z" fill="#26262a"/><path d="M112 104l5 2 6 22h-6z" fill="#26262a"/><path d="M118 104l4 2 8 22h-5z" fill="#e8e8e4"/><path d="M58 70q2 14 10 26t10 30" stroke="#f2f2ee" stroke-width="1.600" fill="none"/></g><rect x="0" y="106" width="87" height="20" fill="#3c3630" opacity=".74"/><text x="4" y="121" font-family="Liberation Sans,sans-serif" font-size="12.500" fill="#fff" letter-spacing="-0.47">Lynne- CSUEB</text></g></svg>
<div class="abs" style="left:1702px;top:713px;width:218px;height:126px;background:#86bc25"></div>
<svg class="abs" style="left:1703px;top:714px" width="217" height="124" viewBox="0 0 217 124"><defs><filter id="b2" x="-5%" y="-5%" width="110%" height="110%"><feGaussianBlur stdDeviation="1.100"/></filter><radialGradient id="fc2" cx=".5" cy=".45" r=".6"><stop offset="0" stop-color="#c9a288"/><stop offset=".7" stop-color="#b08870"/><stop offset="1" stop-color="#8c6a56"/></radialGradient><clipPath id="c2"><rect width="217" height="124"/></clipPath></defs><g clip-path="url(#c2)"><rect width="217" height="124" fill="#bcc0bc"/><g filter="url(#b2)"><rect x="-5" y="-5" width="230" height="40" fill="#c6cac6"/><rect x="-3" y="-3" width="19" height="130" fill="#3e2a20"/><rect x="0" y="30" width="16" height="3" fill="#7a5844"/><rect x="0" y="66" width="16" height="3" fill="#6a4a38"/><path d="M1 14l14 6v9L1 24z" fill="#4a70a8"/><path d="M8 24l12 2v8l-6-2z" fill="#6cb4c4"/><path d="M1 4l14 6" stroke="#b8b8b8" stroke-width="2"/><rect x="31" y="5" width="22" height="58" fill="#3a3428"/><rect x="33.500" y="7.500" width="17" height="15.500" fill="#6e7444"/><rect x="35.500" y="9.500" width="13" height="11.500" fill="#3a3a30"/><rect x="33.500" y="25" width="17" height="15.500" fill="#7a7840"/><rect x="35.500" y="27" width="13" height="11.500" fill="#3a3a30"/><rect x="33" y="42" width="18" height="20" fill="#8c2a1a"/><circle cx="42" cy="14" r="3" fill="#7a6a58"/><circle cx="42" cy="31.500" r="3" fill="#7a6a58"/><rect x="56" y="4" width="116" height="93" fill="#55535c"/><rect x="62" y="9" width="106" height="88" fill="#e5e5e1"/><rect x="62" y="9" width="106" height="3" fill="#f4f4f2"/><path d="M112 12v84" stroke="#c4c4c0" stroke-width="1.500"/><path d="M70 18h14v26H70zM92 18h14v26H92zM120 18h14v26h-14zM142 18h14v26h-14zM70 52h14v36H70zM92 52h14v36H92zM120 52h14v30h-14z" fill="none" stroke="#d6d6d2" stroke-width="1.500"/><path d="M41 42h16l4 17H37z" fill="#a48c74"/><path d="M43 64c0-3 12-3 12 0 3 4 3 12 0 17H43c-3-5-3-13 0-17z" fill="#7ad2ca"/><rect x="47" y="59" width="4" height="5" fill="#5a9a94"/><path d="M34 82h40v5H70v12H38V87h-4z" fill="#1c1c1e"/><rect x="57" y="76" width="10" height="7" fill="#262626"/><path d="M15 82 40 94l40 6h50v8H15z" fill="#d8d4c0"/><path d="M15 86 40 97l40 5" stroke="#b0a890" stroke-width="2" fill="none"/><path d="M20 96h100" stroke="#c4bca4" stroke-width="3" stroke-dasharray="3 4"/><rect x="14" y="107" width="110" height="20" fill="#3a3430"/><path d="M86 106q14-8 30-2v8H86z" fill="#6a6458"/><rect x="174" y="4" width="33" height="104" fill="#5a5650"/><rect x="177" y="7" width="27" height="98" fill="#a4a8a4"/><rect x="179" y="9" width="23" height="14" fill="#cfc6ae"/><path d="M181 9v14M185 9v14M189 9v14M193 9v14M197 9v14" stroke="#a89c84" stroke-width="1"/><rect x="179" y="28" width="23" height="15" fill="#5c5c74"/><rect x="181" y="29" width="4" height="14" fill="#d8d8d8"/><rect x="192" y="30" width="9" height="13" fill="#3e3030"/><rect x="179" y="50" width="23" height="14" fill="#a89884"/><rect x="190" y="52" width="10" height="12" fill="#6a4434"/><rect x="179" y="70" width="23" height="13" fill="#86644e"/><rect x="180" y="71" width="5" height="12" fill="#c46a4a"/><rect x="179" y="88" width="23" height="12" fill="#454545"/><rect x="182" y="94" width="16" height="4" fill="#b8b8b4"/><path d="M177 25h27M177 46h27M177 66h27M177 85h27" stroke="#4a4642" stroke-width="2"/><rect x="207" y="-3" width="14" height="55" fill="#c2c6c2"/><rect x="209" y="49" width="12" height="70" fill="#3a2018"/><rect x="211" y="56" width="8" height="16" fill="#a45a2a"/><path d="M168 100q20-4 40 8v16h-40z" fill="#b0a898"/><path d="M118 124c2-14 8-22 20-24l34 2c18 2 36 10 48 20v6z" fill="#a4b6c6"/><path d="M172 102c16 2 32 8 46 18" stroke="#c4d0da" stroke-width="3" fill="none"/><path d="M121 62c0-36 58-36 60-2" stroke="#1a1a1c" stroke-width="3" fill="none"/><rect x="116" y="58" width="9" height="30" rx="4" fill="#161618"/><rect x="175" y="60" width="8" height="28" rx="4" fill="#161618"/><path d="M120 66c-4-40 66-42 60-2l-4 6-6-14c-12-6-28-6-40 0l-6 16z" fill="#2c2420"/><path d="M125 64c0-12 12-14 25-14s25 2 25 14c0 12-2 26-8 38s-10 18-17 18-12-6-18-18-7-26-7-38z" fill="url(#fc2)"/><path d="M124 58c4-16 48-16 52 0-8-8-44-8-52 0z" fill="#2c2420"/><path d="M132 69q6-3 12 0v3q-6-2-12 0zM156 69q6-3 12 0v3q-6-2-12 0z" fill="#2e221c"/><path d="M130 65q7-4 15-1M155 64q8-3 15 1" stroke="#2c2420" stroke-width="2.200" fill="none"/><ellipse cx="150" cy="84" rx="5" ry="3.500" fill="#9c745e"/><path d="M137 94q6-5 13-3 7-2 13 3-6 1-13 0-7 1-13 0z" fill="#2e221c"/><path d="M136 108q14 8 30 0l-2 14q-12 6-26 0z" fill="#3a2c24"/><path d="M128 84q2 22 12 30M173 84q-2 22-10 30" stroke="#5a4438" stroke-width="3" fill="none" opacity=".6"/><rect x="152" y="118" width="12" height="8" fill="#1c1c1c"/></g><rect x="0" y="107" width="123" height="17" fill="#3c3630" opacity=".74"/><text x="4" y="120.500" font-family="Liberation Sans,sans-serif" font-size="12.500" fill="#fff" letter-spacing="0.15">Emmanuel Gallegos</text></g></svg>
<div class="abs" style="left:1702px;top:840px;width:218px;height:129px;background:#86bc25"></div><div class="abs" style="left:1703px;top:841px;width:217px;height:128px;background:linear-gradient(#dcdcd4 0,#e6e6de 40%,#b0aa9c 50%,#3a2c26 58%,#2a2220 90%,#3a302a)"></div>
<div class="abs" style="left:1547.500px;top:840.500px;width:359.500px;height:171.500px;background:#fff;box-shadow:1px 2px 5px rgba(0,0,0,.5),0 0 2px rgba(0,0,0,.25)"></div>
<svg class="abs" style="left:1731px;top:1011.500px" width="26" height="18" viewBox="0 0 26 18"><path d="M0 0h25L16 16z" fill="#fff"/><path d="M25.500 0 16 16" stroke="#444" stroke-width="1.600" fill="none" opacity=".75"/></svg>
<svg class="abs" style="left:1876px;top:860px" width="10" height="10" viewBox="0 0 10 10"><path d="M.5.500l9 9M9.500.500l-9 9" stroke="#5f6368" stroke-width="1.200"/></svg>
<svg class="abs" style="left:1564px;top:880px" width="23" height="20" viewBox="0 0 23 20"><path d="M7.800 0h7.400L23 13.300h-7.400z" fill="#5a5a5a"/><path d="M7.300 .8 11 7.200 3.700 20 0 13.600z" fill="#8a8a8a"/><path d="M8.400 14.300H22.600L19 20H4.800z" fill="#707070"/></svg>
<div class="abs" style="left:1594.400px;top:881.500px;font-size:12.500px;font-weight:bold;line-height:16px;color:#111;white-space:nowrap;letter-spacing:-0.4px">Find your files in Google Drive</div>
<div class="abs" style="left:1564px;top:910px;font-size:13px;line-height:15px;color:#111;white-space:nowrap;letter-spacing:-0.11px">Selected folders on your computer continuously<br><span style="letter-spacing:-0.24px">back up to Google Drive in the "Computers" tab</span></div>
<div class="abs" style="left:1637.400px;top:974px;font-size:12.500px;line-height:16px;color:#3367d6;white-space:nowrap;letter-spacing:-0.4px">NOT NOW</div>
<div class="abs" style="left:1725px;top:965px;width:165px;height:33px;background:#3367d6;border-radius:2px"></div>
<div class="abs" style="left:1745.400px;top:974px;font-size:12.500px;line-height:16px;color:#fff;white-space:nowrap;letter-spacing:-0.63px">OPEN GOOGLE DRIVE</div>
</body></html>
